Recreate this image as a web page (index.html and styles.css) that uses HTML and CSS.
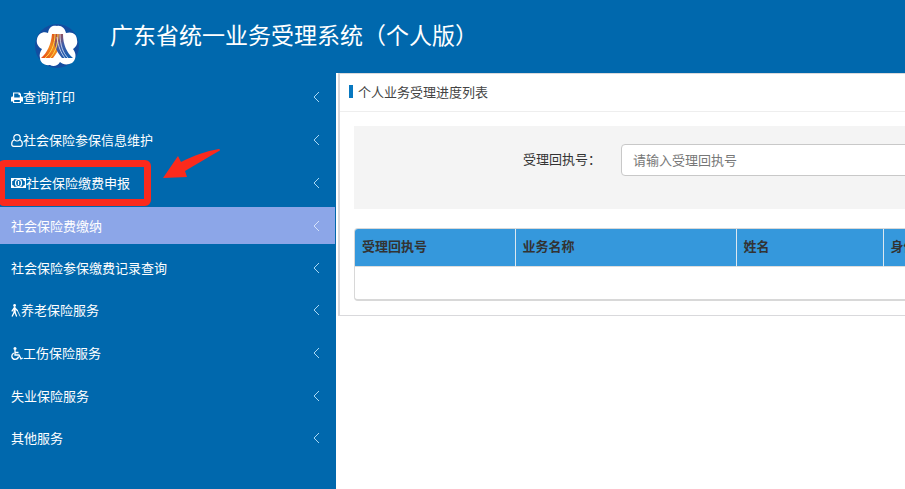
FILE: index.html
```html
<!DOCTYPE html>
<html lang="zh-CN">
<head>
<meta charset="utf-8">
<title>广东省统一业务受理系统（个人版）</title>
<link rel="stylesheet" href="styles.css">
</head>
<body>
<header class="topbar">
  <svg class="logo" viewBox="0 0 46 46" aria-hidden="true">
    <defs>
      <linearGradient id="warm" x1="1" y1="0" x2="0" y2="1">
        <stop offset="0" stop-color="#dc3b1c"/><stop offset=".5" stop-color="#f28a1c"/><stop offset="1" stop-color="#e8481a"/>
      </linearGradient>
      <linearGradient id="cool" x1="0" y1="0" x2="1" y2="1">
        <stop offset="0" stop-color="#d8461e"/><stop offset=".45" stop-color="#3f5ca8"/><stop offset="1" stop-color="#0c5fb0"/>
      </linearGradient>
    </defs>
    <circle cx="23" cy="23" r="22" fill="#134da0"/>
    <path fill="#fff" d="M14 10C15 3 20 2 23 3c4-1 8 2 9 7 6-2 11 1 11 7 1 4-1 7-4 9 4 5 3 11-1 14-4 2-9 2-12-1-2 4-7 5-10 3-6 1-10-3-10-7-1-3 0-6 2-9-4-2-6-6-5-10 1-5 6-8 11-6z"/>
    <path fill="url(#warm)" d="M18 11h8c1 10-1 17-7 24H7c6-5 10-13 11-24z"/>
    <path fill="url(#cool)" d="M20 11h9c0 11 4 19 10 24H28c-6-7-9-14-8-24z"/>
    <path d="M21 11c0 11-4 19-10 24M24 11c0 11-3 19-8 24" fill="none" stroke="#ffd84a" stroke-width="1"/>
    <path d="M26 11c0 11 3 19 8 24M23 14c1 9 4 16 8 21" fill="none" stroke="#dbe9fa" stroke-width=".8"/>
  </svg>
  <h1 class="title">广东省统一业务受理系统（个人版）</h1>
</header>
<div class="layout">
  <nav class="sidebar">
    <a class="item with-icon" href="#"><svg class="icon" viewBox="0 0 12 12"><path fill="currentColor" fill-rule="evenodd" d="M2 1h6.500L10 2.500V5h.5C11.500 5 12 5.600 12 6.500V10h-2v1.500H2V10H0V6.500C0 5.600.5 5 1.500 5H2zM3.200 2v4h5.600V3.500H7.500V2zM3.200 8.500v2h5.600v-2z"/></svg><span class="label">查询打印</span><svg class="chevron" viewBox="0 0 8 12"><path d="M7 1 2 6l5 5"/></svg></a>
    <a class="item with-icon" href="#"><svg class="icon" viewBox="0 0 12 13"><g fill="none" stroke="currentColor" stroke-width="1.200"><circle cx="6" cy="3.800" r="3.200"/><path d="M3.300 5.800C1.300 6.600.7 8.300.7 10c0 1.300.8 2.300 2.100 2.300h6.400c1.300 0 2.100-1 2.100-2.300 0-1.700-.6-3.400-2.600-4.200"/></g></svg><span class="label">社会保险参保信息维护</span><svg class="chevron" viewBox="0 0 8 12"><path d="M7 1 2 6l5 5"/></svg></a>
    <div class="marked">
      <a class="item with-icon" href="#"><svg class="icon money" viewBox="0 0 15 10"><path fill="currentColor" fill-rule="evenodd" d="M0 0h15v10H0zM3 1.200C3 2.200 2.200 3 1.200 3v4c1 0 1.800.8 1.800 1.800h9c0-1 .8-1.800 1.800-1.800V3c-1 0-1.800-.8-1.800-1.800z"/><ellipse cx="7.500" cy="5" rx="3" ry="3.500" fill="none" stroke="currentColor" stroke-width="1.200"/><path d="M7.500 3v4" stroke="currentColor" stroke-width="1.200"/></svg><span class="label">社会保险缴费申报</span><svg class="chevron" viewBox="0 0 8 12"><path d="M7 1 2 6l5 5"/></svg></a>
      <span class="callout"></span>
      <svg class="arrow" viewBox="0 0 58 32" aria-hidden="true"><path fill="#fb2a1c" d="M0 29 15 7l3 6C30 7 43 2 56 0q2 1 0 2C45 8 34 15 22 22l2 6z"/></svg>
    </div>
    <a class="item active" href="#"><span class="label">社会保险费缴纳</span><svg class="chevron" viewBox="0 0 8 12"><path d="M7 1 2 6l5 5"/></svg></a>
    <a class="item" href="#"><span class="label">社会保险参保缴费记录查询</span><svg class="chevron" viewBox="0 0 8 12"><path d="M7 1 2 6l5 5"/></svg></a>
    <a class="item with-icon" href="#"><svg class="icon walker" viewBox="0 0 10 14"><g fill="none" stroke="currentColor" stroke-linecap="round"><path stroke-width="2.400" d="M3.500 4.500v4"/><path stroke-width="1.400" d="M3.300 8.500 1 13M3.800 8.500l1.700 4.500M3 4.500.8 7.500M4 4.500 6.500 7"/><path stroke-width=".9" d="M6.500 7 9.300 13"/></g><circle cx="3.500" cy="1.600" r="1.500" fill="currentColor"/></svg><span class="label">养老保险服务</span><svg class="chevron" viewBox="0 0 8 12"><path d="M7 1 2 6l5 5"/></svg></a>
    <a class="item with-icon" href="#"><svg class="icon" viewBox="0 0 12 13"><g fill="none" stroke="currentColor" stroke-width="1.300"><path d="M4 3v5h4l2 3.800 1.800-.8M4 5.500h3.500M2.700 6C-.5 8.200.8 12.300 4 12.300c2 0 3.200-1.100 3.600-2.800"/></g><circle cx="4" cy="1.500" r="1.500" fill="currentColor"/></svg><span class="label">工伤保险服务</span><svg class="chevron" viewBox="0 0 8 12"><path d="M7 1 2 6l5 5"/></svg></a>
    <a class="item" href="#"><span class="label">失业保险服务</span><svg class="chevron" viewBox="0 0 8 12"><path d="M7 1 2 6l5 5"/></svg></a>
    <a class="item" href="#"><span class="label">其他服务</span><svg class="chevron" viewBox="0 0 8 12"><path d="M7 1 2 6l5 5"/></svg></a>
  </nav>
  <main class="content">
    <section class="panel">
      <h2 class="panel-title">个人业务受理进度列表</h2>
      <div class="panel-body">
        <form class="search">
          <label class="search-label" for="receipt">受理回执号：</label>
          <input class="search-input" id="receipt" type="text" placeholder="请输入受理回执号">
        </form>
        <div class="table-box">
          <table class="results">
            <thead>
              <tr><th class="col-receipt">受理回执号</th><th class="col-business">业务名称</th><th class="col-name">姓名</th><th>身份证号</th></tr>
            </thead>
            <tbody>
              <tr><td colspan="4"></td></tr>
            </tbody>
          </table>
        </div>
      </div>
    </section>
  </main>
</div>
</body>
</html>
```
FILE: styles.css
```css
* {
  box-sizing: border-box;
}

body {
  display: flex;
  flex-direction: column;
  min-height: 100vh;
  margin: 0;
  overflow-x: hidden;
  background: #fff;
  color: #333;
  font: 13px/20px "Noto Sans CJK SC", sans-serif;
}

.topbar {
  display: flex;
  align-items: flex-start;
  gap: 30px;
  height: 73px;
  padding: 20px 34px 0;
  background: #0068ad;
}

.logo {
  flex: none;
  width: 46px;
  height: 52px;
}

.title {
  margin: 0;
  color: #fff;
  font-size: 23px;
  font-weight: 400;
  line-height: 28px;
  white-space: nowrap;
}

.layout {
  display: flex;
  flex: 1;
}

.sidebar {
  display: flex;
  flex: none;
  flex-direction: column;
  gap: 5px;
  width: 336px;
  padding: 5px 1px 5px 0;
  background: #0068ad;
}

.item {
  display: flex;
  align-items: center;
  height: 37px;
  padding: 0 15px 0 11px;
  color: #fff;
  text-decoration: none;
}

.with-icon {
  height: 38px;
}

.active {
  background: #8ca6e8;
}

.label {
  flex: 1;
}

.icon {
  flex: none;
  width: 12px;
  height: 13px;
}

.money {
  width: 15px;
  height: 10px;
}

.walker {
  width: 10px;
}

.chevron {
  width: 8px;
  height: 12px;
  fill: none;
  stroke: #a9d8f5;
}

.active .chevron {
  stroke: #d5e2fb;
}

.marked {
  position: relative;
}

.callout {
  position: absolute;
  top: -4px;
  left: -2px;
  width: 153px;
  height: 46px;
  border: 7px solid #fb2a1c;
  border-radius: 6px;
}

.arrow {
  position: absolute;
  top: -15px;
  left: 163px;
  width: 58px;
  height: 32px;
}

.content {
  flex: 1;
  min-width: 0;
  padding-left: 2px;
  overflow: hidden;
}

.panel {
  min-width: 760px;
  border: 1px solid #d9d9dc;
  border-left-width: 2px;
}

.panel-title {
  display: flex;
  align-items: center;
  gap: 5px;
  height: 38px;
  margin: 0;
  padding: 0 9px 2px;
  border-bottom: 1px solid #eee;
  color: #444;
  font-size: 13px;
  font-weight: 400;
}

.panel-title::before {
  width: 4px;
  height: 13px;
  background: #0878c0;
  content: "";
}

.panel-body {
  padding: 14px;
}

.search {
  display: flex;
  align-items: flex-start;
  height: 83px;
  margin-bottom: 19px;
  padding: 18px 15px;
  background: #f4f4f4;
}

.search-label {
  width: 252px;
  padding-right: 20px;
  line-height: 30px;
  text-align: right;
}

.search-input {
  flex: 1;
  height: 32px;
  padding: 0 11px 2px;
  border: 1px solid #c8c8c8;
  border-radius: 4px;
  background: #fff;
  font: inherit;
}

.search-input::placeholder {
  color: #777;
}

.table-box {
  overflow: hidden;
  border: 1px solid #d8d8d8;
  border-bottom-width: 2px;
  border-radius: 4px;
}

.results {
  width: 100%;
  border-collapse: collapse;
  table-layout: fixed;
}

.results th {
  height: 37px;
  padding: 0 7px 2px;
  border-right: 1px solid #dce8f0;
  background: #3598dc;
  font-weight: 700;
  text-align: left;
}

.results td {
  height: 33px;
  padding: 0;
  border-top: 1px solid #ddd;
}

.col-receipt {
  width: 160px;
}

.col-business {
  width: 221px;
}

.col-name {
  width: 147px;
}
```
